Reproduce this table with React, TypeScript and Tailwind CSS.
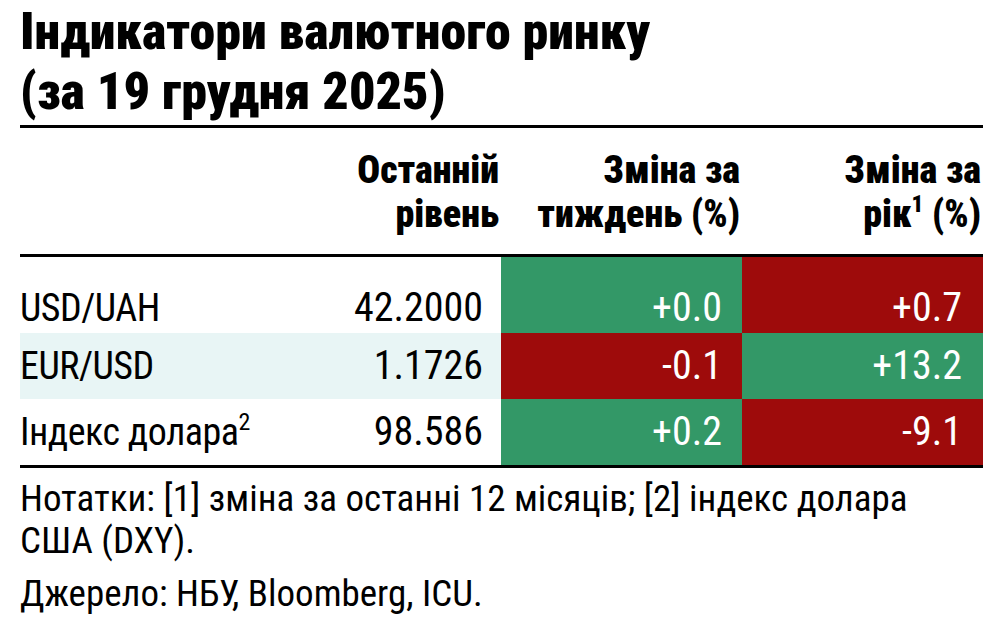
import React from 'react';

interface Row {
  name: React.ReactNode;
  level: string;
  week: string;
  year: string;
  weekUp: boolean;
  yearUp: boolean;
  shaded?: boolean;
}

const rows: Row[] = [
  { name: 'USD/UAH', level: '42.2000', week: '+0.0', year: '+0.7', weekUp: true, yearUp: false },
  { name: 'EUR/USD', level: '1.1726', week: '-0.1', year: '+13.2', weekUp: false, yearUp: true, shaded: true },
  {
    name: (
      <>
        Індекс долара<span className="relative -top-[15px] text-[24px] leading-[0]">2</span>
      </>
    ),
    level: '98.586',
    week: '+0.2',
    year: '-9.1',
    weekUp: true,
    yearUp: false,
  },
];

export default function App() {
  return (
    <div className="w-[1003px] h-[631px] bg-white px-[20px] text-black overflow-hidden font-['Roboto_Condensed',Roboto,sans-serif] font-stretch-condensed">
      <h1 className="pt-[2px] text-[52px] leading-[60px] font-black">
        Індикатори валютного ринку
        <br />
        (за 19 грудня 2025)
      </h1>
      <div className="mt-[3px] border-t-[3px] border-black" />

      {/* table header */}
      <div className="grid grid-cols-[481px_241px_241px] pt-[20px] pb-[18px] text-[38px] leading-[44px] font-black text-right">
        <div className="pr-[2px]">
          Останній
          <br />
          рівень
        </div>
        <div className="pr-[2px]">
          Зміна за
          <br />
          тиждень (%)
        </div>
        <div className="pr-[2px]">
          Зміна за
          <br />
          рік<span className="relative -top-[15px] text-[23px] leading-[0]">1</span> (%)
        </div>
      </div>
      <div className="border-t-[3px] border-black" />

      {/* rows */}
      <div className="text-[40px] leading-[40px]">
        {rows.map((r, i) => {
          const h = i === 0 ? 'h-[76px] pb-[5px]' : 'h-[66px] pb-[13px]';
          return (
            <div key={i} className="grid grid-cols-[481px_241px_241px]">
              <div className={`flex items-end justify-between ${h} ${r.shaded ? 'bg-[#e8f5f5]' : ''}`}>
                <span className="text-[38px] tracking-[-0.5px]">{r.name}</span>
                <span className="pr-[18px]">{r.level}</span>
              </div>
              <div
                className={`flex items-end justify-end pr-[20px] text-white ${h} ${
                  r.weekUp ? 'bg-[#339867]' : 'bg-[#9e0b0b]'
                }`}
              >
                {r.week}
              </div>
              <div
                className={`flex items-end justify-end pr-[21px] text-white ${h} ${
                  r.yearUp ? 'bg-[#339867]' : 'bg-[#9e0b0b]'
                }`}
              >
                {r.year}
              </div>
            </div>
          );
        })}
      </div>
      <div className="border-t-[3px] border-black" />

      {/* notes */}
      <p className="mt-[10px] text-[37px] leading-[42px]">
        Нотатки: [1] зміна за останні 12 місяців; [2] індекс долара
        <br />
        США (DXY).
      </p>
      <p className="mt-[11px] text-[37px] leading-[42px]">Джерело: НБУ, Bloomberg, ICU.</p>
    </div>
  );
}
